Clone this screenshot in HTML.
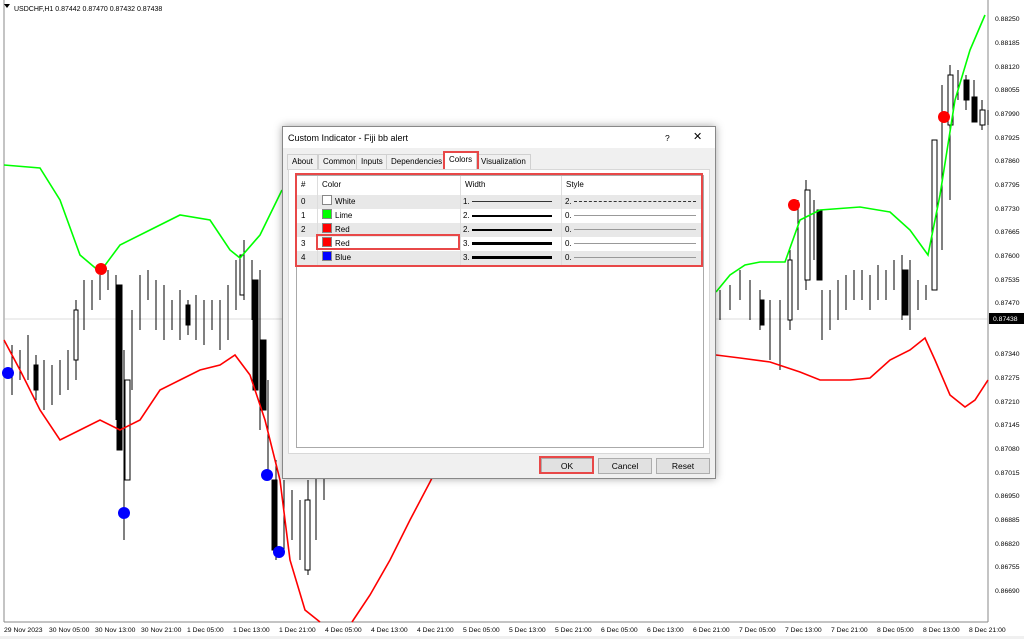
<!DOCTYPE html>
<html><head><meta charset="utf-8"><style>
body{margin:0;width:1024px;height:639px;overflow:hidden;background:#fff;font-family:"Liberation Sans",sans-serif;}
.dlg{position:absolute;left:282px;top:126px;width:432px;height:351px;background:#f0f0f0;border:1px solid #888;box-shadow:0 0 8px rgba(0,0,0,.35);font-size:8.5px;color:#000}
.ttl{height:21px;background:#fff;position:relative}
.ttl span{position:absolute;top:6px}
.tab{position:absolute;top:27px;height:14px;line-height:14px;border:1px solid #d0d0d0;background:#f0f0f0;padding:0 4px;font-size:8px}
.panel{position:absolute;left:5px;top:42px;width:420px;height:283px;background:#fff;border:1px solid #d8d8d8}
.tbl{position:absolute;left:7px;top:5px;width:406px;height:271px;border:1px solid #aaa}
.row{position:absolute;left:0;width:406px;height:14px;line-height:14px;font-size:8px}
.c{position:absolute;top:0;height:14px;border-left:1px solid #ddd}
.btn{position:absolute;top:331px;height:14px;line-height:14px;text-align:center;background:#e1e1e1;border:1px solid #adadad;font-size:8.5px}
.sw{display:inline-block;width:8px;height:8px;border:1px solid #888;vertical-align:-1px;margin-right:3px}
.hl{position:absolute;border:2px solid #e84848}
</style></head><body>
<svg width="1024" height="639" style="position:absolute;left:0;top:0" font-family="Liberation Sans" font-size="7">
<rect x="4" y="0" width="984" height="622" fill="#fff"/>
<line x1="988" y1="0" x2="988" y2="622" stroke="#888"/>
<line x1="4" y1="622" x2="988" y2="622" stroke="#888"/>
<line x1="4" y1="0" x2="4" y2="622" stroke="#888"/>
<line x1="4" y1="319" x2="988" y2="319" stroke="#bbb" stroke-width="0.6"/>
<polygon points="4,4 10,4 7,8" fill="#000"/>
<text x="14" y="11" font-size="7">USDCHF,H1  0.87442 0.87470 0.87432 0.87438</text>
<g id="cand" stroke="#000" stroke-width="1">
<path d="M12 345V395M20 350V380M28 335V380M36 355V400M44 360V410M52 365V405M60 360V395M68 350V390M76 300V380M84 280V330M92 280V310M100 275V300M108 270V290M116 275V420M124 350V540M132 310V390M140 275V330M148 270V300M156 280V330M164 285V340M172 300V330M180 290V340M188 300V335M196 295V340M204 300V345M212 300V330M220 300V350M228 285V340M236 260V310M244 240V300M252 260V320M260 270V430M268 380V480M276 460V560M284 480V550M292 490V540M300 500V560M308 480V575M316 470V540M324 470V500M720 290V320M730 285V310M740 270V300M750 280V320M760 290V330M770 300V360M780 300V370M790 250V330M798 200V310M806 180V290M814 200V260M822 290V340M830 290V330M838 280V320M846 275V310M854 270V300M862 270V300M870 275V310M878 265V300M886 270V300M894 260V290M902 255V320M910 260V330M918 280V310M926 285V300M934 150V290M942 85V250M950 65V200M958 70V100M966 75V110M974 80V120M982 100V130M988 110V125"/>
</g>
<g stroke="#000" stroke-width="1">
<rect x="117" y="285" width="5" height="165" fill="#000"/><rect x="125" y="380" width="5" height="100" fill="#fff"/>
<rect x="253" y="280" width="5" height="110" fill="#000"/><rect x="261" y="340" width="5" height="70" fill="#000"/>
<rect x="272" y="480" width="5" height="70" fill="#000"/><rect x="305" y="500" width="5" height="70" fill="#fff"/>
<rect x="805" y="190" width="5" height="90" fill="#fff"/><rect x="817" y="210" width="5" height="70" fill="#000"/>
<rect x="903" y="270" width="5" height="45" fill="#000"/><rect x="932" y="140" width="5" height="150" fill="#fff"/>
<rect x="948" y="75" width="5" height="50" fill="#fff"/><rect x="964" y="80" width="5" height="20" fill="#000"/>
<rect x="972" y="97" width="5" height="25" fill="#000"/><rect x="980" y="110" width="5" height="15" fill="#fff"/>
<rect x="34" y="365" width="4" height="25" fill="#000"/><rect x="74" y="310" width="4" height="50" fill="#fff"/>
<rect x="186" y="305" width="4" height="20" fill="#000"/><rect x="240" y="255" width="4" height="40" fill="#fff"/>
<rect x="760" y="300" width="4" height="25" fill="#000"/><rect x="788" y="260" width="4" height="60" fill="#fff"/>
</g>
<polyline fill="none" stroke="#00ff00" stroke-width="1.6" points="4,165 40,168 60,200 80,255 100,272 120,245 150,230 180,215 210,220 230,250 240,258 260,235 282,190"/>
<polyline fill="none" stroke="#00ff00" stroke-width="1.6" points="716,292 730,275 745,265 760,262 785,262 800,220 820,210 860,207 890,212 910,230 928,255 940,195 955,100 970,50 985,15"/>
<polyline fill="none" stroke="#ff0000" stroke-width="1.6" points="4,340 20,370 40,410 60,440 80,430 100,420 120,430 140,420 160,390 180,380 200,370 220,365 235,355 250,375 265,420 280,480 290,560 305,610 320,622"/>
<polyline fill="none" stroke="#ff0000" stroke-width="1.6" points="352,622 370,595 390,560 410,520 430,482 440,462"/>
<polyline fill="none" stroke="#ff0000" stroke-width="1.6" points="716,355 740,358 770,362 800,372 820,380 850,380 870,378 890,360 910,350 925,338 935,360 950,395 965,407 975,400 988,380"/>
<circle cx="101" cy="269" r="6" fill="#f00"/><circle cx="794" cy="205" r="6" fill="#f00"/><circle cx="944" cy="117" r="6" fill="#f00"/>
<circle cx="8" cy="373" r="6" fill="#00f"/><circle cx="124" cy="513" r="6" fill="#00f"/><circle cx="267" cy="475" r="6" fill="#00f"/><circle cx="279" cy="552" r="6" fill="#00f"/>
<g fill="#000" font-size="6.8">
<text x="995" y="21">0.88250</text><text x="995" y="45">0.88185</text><text x="995" y="69">0.88120</text><text x="995" y="92">0.88055</text><text x="995" y="116">0.87990</text><text x="995" y="140">0.87925</text><text x="995" y="163">0.87860</text><text x="995" y="187">0.87795</text><text x="995" y="211">0.87730</text><text x="995" y="234">0.87665</text><text x="995" y="258">0.87600</text><text x="995" y="282">0.87535</text><text x="995" y="305">0.87470</text><text x="995" y="356">0.87340</text><text x="995" y="380">0.87275</text><text x="995" y="404">0.87210</text><text x="995" y="427">0.87145</text><text x="995" y="451">0.87080</text><text x="995" y="475">0.87015</text><text x="995" y="498">0.86950</text><text x="995" y="522">0.86885</text><text x="995" y="546">0.86820</text><text x="995" y="569">0.86755</text><text x="995" y="593">0.86690</text>
</g>
<rect x="989" y="313" width="35" height="11" fill="#000"/><text x="993" y="321" fill="#fff" font-size="6.8">0.87438</text>
<g fill="#000" font-size="6.8">
<text x="4" y="632">29 Nov 2023</text><text x="49" y="632">30 Nov 05:00</text><text x="95" y="632">30 Nov 13:00</text><text x="141" y="632">30 Nov 21:00</text><text x="187" y="632">1 Dec 05:00</text><text x="233" y="632">1 Dec 13:00</text><text x="279" y="632">1 Dec 21:00</text><text x="325" y="632">4 Dec 05:00</text><text x="371" y="632">4 Dec 13:00</text><text x="417" y="632">4 Dec 21:00</text><text x="463" y="632">5 Dec 05:00</text><text x="509" y="632">5 Dec 13:00</text><text x="555" y="632">5 Dec 21:00</text><text x="601" y="632">6 Dec 05:00</text><text x="647" y="632">6 Dec 13:00</text><text x="693" y="632">6 Dec 21:00</text><text x="739" y="632">7 Dec 05:00</text><text x="785" y="632">7 Dec 13:00</text><text x="831" y="632">7 Dec 21:00</text><text x="877" y="632">8 Dec 05:00</text><text x="923" y="632">8 Dec 13:00</text><text x="969" y="632">8 Dec 21:00</text>
</g>
<rect x="0" y="636" width="1024" height="3" fill="#f0f0f0"/>
</svg>

<div class="dlg">
<div class="ttl"><span style="left:5px;font-size:9px">Custom Indicator - Fiji bb alert</span><span style="left:382px">?</span><span style="left:410px;font-size:11px;top:3px">✕</span></div>
<div class="tab" style="left:4px">About</div><div class="tab" style="left:35px">Common</div><div class="tab" style="left:73px">Inputs</div><div class="tab" style="left:103px">Dependencies</div><div class="tab" style="left:161px;top:25px;height:16px;background:#fff">Colors</div><div class="tab" style="left:193px">Visualization</div>
<div class="hl" style="left:160px;top:24px;width:32px;height:16px"></div>
<div class="panel"><div class="tbl">
<div class="row" style="top:1px;height:16px;line-height:16px;background:#fff"><span style="position:absolute;left:4px">#</span><span style="position:absolute;left:25px">Color</span><span style="position:absolute;left:168px">Width</span><span style="position:absolute;left:269px">Style</span></div>
<div class="row" style="top:19px;background:#e8e8e8"><span style="position:absolute;left:4px">0</span><span style="position:absolute;left:25px"><i class="sw" style="background:#fff"></i>White</span><span style="position:absolute;left:166px">1. <b style="display:inline-block;width:80px;border-top:1px solid #333;vertical-align:middle"></b></span><span style="position:absolute;left:268px">2. <b style="display:inline-block;width:122px;border-top:1px dashed #333;vertical-align:middle"></b></span></div>
<div class="row" style="top:33px;background:#fff"><span style="position:absolute;left:4px">1</span><span style="position:absolute;left:25px"><i class="sw" style="background:#0f0"></i>Lime</span><span style="position:absolute;left:166px">2. <b style="display:inline-block;width:80px;border-top:2px solid #000;vertical-align:middle"></b></span><span style="position:absolute;left:268px">0. <b style="display:inline-block;width:122px;border-top:1px solid #999;vertical-align:middle"></b></span></div>
<div class="row" style="top:47px;background:#e8e8e8"><span style="position:absolute;left:4px">2</span><span style="position:absolute;left:25px"><i class="sw" style="background:#f00"></i>Red</span><span style="position:absolute;left:166px">2. <b style="display:inline-block;width:80px;border-top:2px solid #000;vertical-align:middle"></b></span><span style="position:absolute;left:268px">0. <b style="display:inline-block;width:122px;border-top:1px solid #999;vertical-align:middle"></b></span></div>
<div class="row" style="top:61px;background:#fff"><span style="position:absolute;left:4px">3</span><span style="position:absolute;left:25px"><i class="sw" style="background:#f00"></i>Red</span><span style="position:absolute;left:166px">3. <b style="display:inline-block;width:80px;border-top:3px solid #000;vertical-align:middle"></b></span><span style="position:absolute;left:268px">0. <b style="display:inline-block;width:122px;border-top:1px solid #999;vertical-align:middle"></b></span></div>
<div class="row" style="top:75px;background:#e8e8e8"><span style="position:absolute;left:4px">4</span><span style="position:absolute;left:25px"><i class="sw" style="background:#00f"></i>Blue</span><span style="position:absolute;left:166px">3. <b style="display:inline-block;width:80px;border-top:3px solid #000;vertical-align:middle"></b></span><span style="position:absolute;left:268px">0. <b style="display:inline-block;width:122px;border-top:1px solid #999;vertical-align:middle"></b></span></div>
<div style="position:absolute;left:20px;top:0;width:1px;height:90px;background:#ddd"></div>
<div style="position:absolute;left:163px;top:0;width:1px;height:90px;background:#ddd"></div>
<div style="position:absolute;left:264px;top:0;width:1px;height:90px;background:#ddd"></div>
</div></div>
<div class="hl" style="left:12px;top:46px;width:404px;height:90px"></div>
<div class="hl" style="left:33px;top:107px;width:140px;height:12px"></div>
<div class="btn" style="left:258px;width:50px">OK</div><div class="hl" style="left:256px;top:329px;width:51px;height:14px"></div>
<div class="btn" style="left:315px;width:52px">Cancel</div>
<div class="btn" style="left:373px;width:52px">Reset</div>
</div>
</body></html>
